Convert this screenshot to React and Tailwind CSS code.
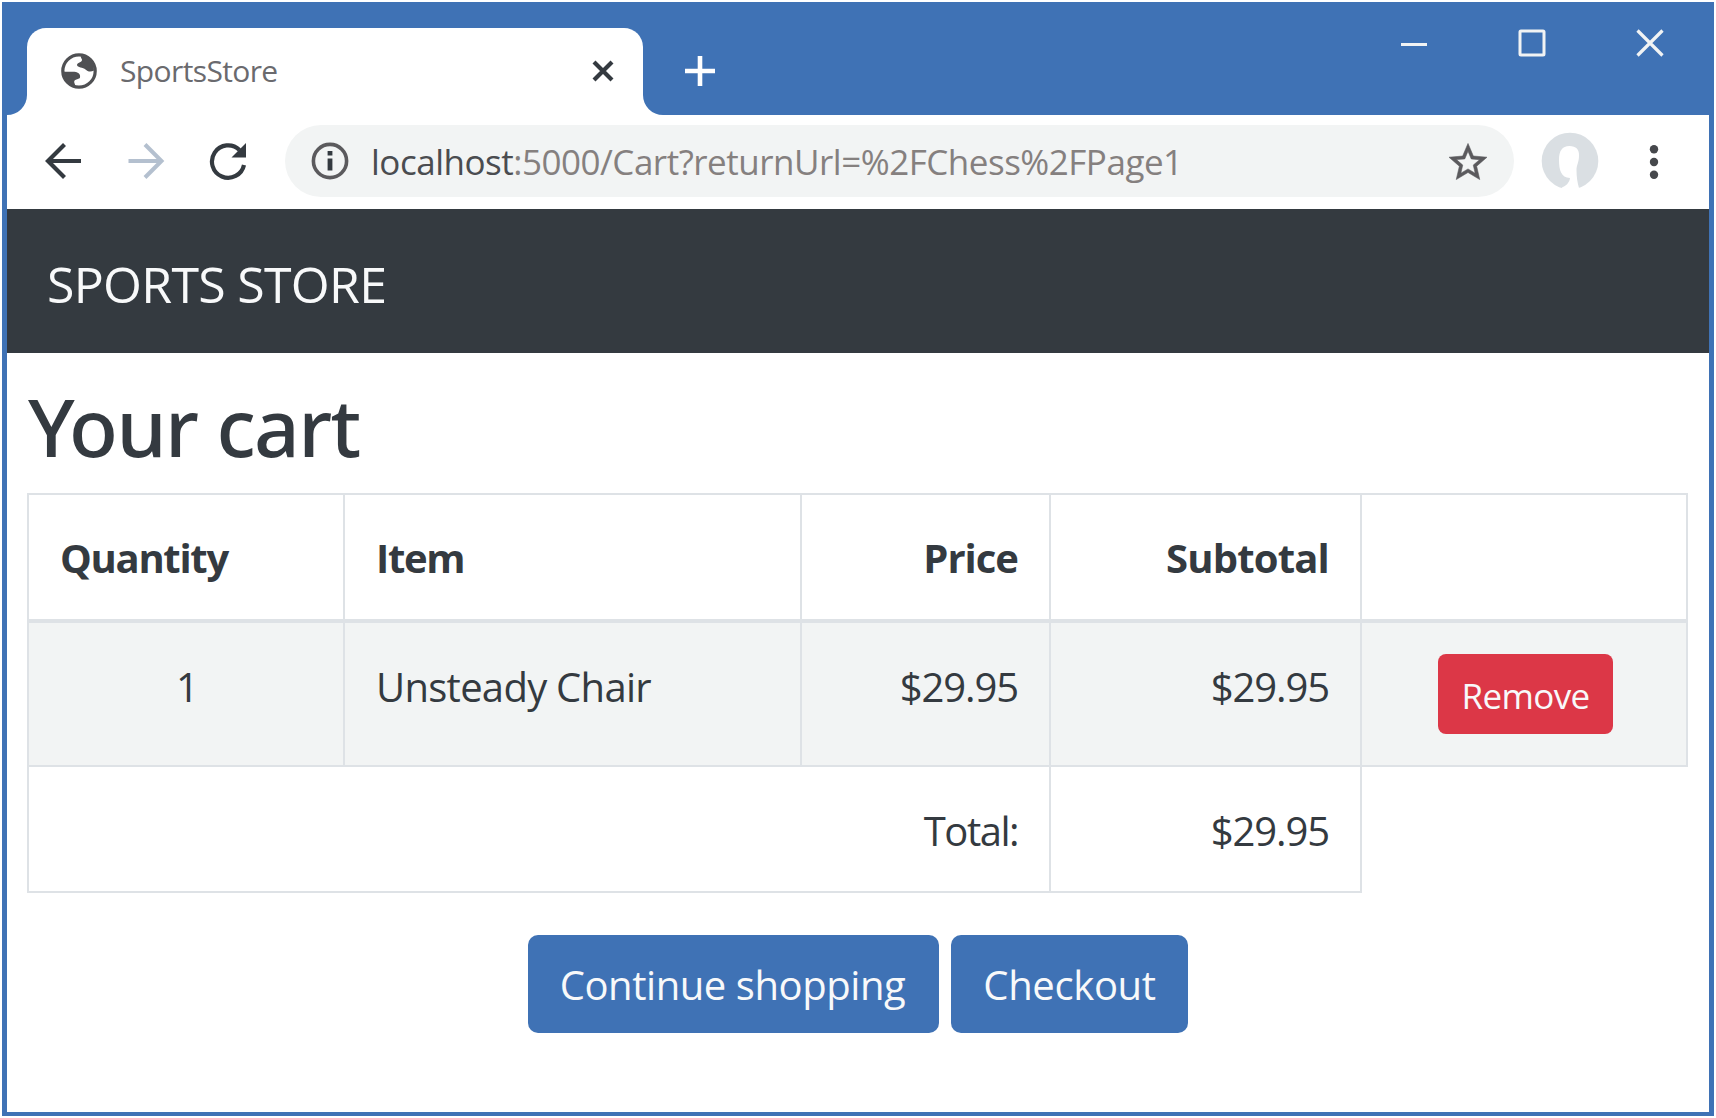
import React from "react";

const INK = "#343a40";

function Globe() {
  return (
    <svg viewBox="0 0 36 36" className="-mt-[2px] h-9 w-9 shrink-0">
      <circle cx="18" cy="18" r="16.2" fill="#fff" stroke="#4f5053" strokeWidth="3.2" />
      <path d="M20 3 C27 3.500 33 9 33 17.500 C29.500 19.500 26.500 18.500 24.500 16.500 C22 14 16.500 15 16 12 C16 9.500 21 9.500 21 7 C21 5 19.500 5.500 20 3 Z" fill="#4f5053" />
      <path d="M3 18.500 C5.500 19.500 11 18 15 19 C18.500 20 19.500 22 19 24.500 C18.500 26.500 13.500 26 13.200 28.500 C13 30.500 14.500 31 14 33 C7 31.500 2.500 26 3 18.500 Z" fill="#4f5053" />
    </svg>
  );
}

function TabStrip() {
  return (
    <div className="flex h-[113px] items-end">
      <svg viewBox="0 0 20 20" className="h-5 w-5 shrink-0">
        <path d="M0 20 A20 20 0 0 0 20 0 V20 Z" fill="#fff" />
      </svg>
      <div className="flex h-[87px] w-[616px] items-center rounded-t-[19px] bg-white pl-[34px] pr-[28px]">
        <Globe />
        <span className="-mt-[2px] ml-[23px] flex-1 whitespace-nowrap text-[30px] leading-[40px] tracking-[-0.62px] text-[#6a6a6e]">SportsStore</span>
        <svg viewBox="0 0 24 24" className="-mt-px h-6 w-6" stroke={INK} strokeWidth="4.2">
          <path d="M3 3 L21 21 M21 3 L3 21" />
        </svg>
      </div>
      <svg viewBox="0 0 20 20" className="h-5 w-5 shrink-0">
        <path d="M20 20 A20 20 0 0 1 0 0 V20 Z" fill="#fff" />
      </svg>
      <svg viewBox="0 0 32 32" className="mb-[28px] ml-[21px] h-8 w-8" stroke="#fff" strokeWidth="4.6">
        <path d="M16 1 V31 M1 16 H31" />
      </svg>
      <div className="ml-auto mr-[44px] flex items-center gap-[88px] self-start pt-[26px]">
        <svg viewBox="0 0 30 30" className="h-[30px] w-[30px]" fill="none" stroke="#f1f3f4" strokeWidth="3">
          <path d="M2 16.500 H28" />
        </svg>
        <svg viewBox="0 0 30 30" className="h-[30px] w-[30px]" fill="none" stroke="#f1f3f4" strokeWidth="3">
          <rect x="3" y="3" width="24" height="24" rx="1" />
        </svg>
        <svg viewBox="0 0 30 30" className="h-[30px] w-[30px]" fill="none" stroke="#f1f3f4" strokeWidth="3.2">
          <path d="M2.500 2.500 L27.500 27.500 M27.500 2.500 L2.500 27.500" />
        </svg>
      </div>
    </div>
  );
}

function Toolbar() {
  return (
    <div className="flex h-[94px] items-center bg-white pb-[2px] pl-[38px]">
      <svg viewBox="0 0 38 38" className="h-[38px] w-[38px]" fill="none" stroke={INK} strokeWidth="4.2">
        <path d="M36 19 H4 M19.500 2.500 L3 19 L19.500 35.500" />
      </svg>
      <svg viewBox="0 0 38 38" className="ml-[44px] h-[38px] w-[38px]" fill="none" stroke="#b4c0cf" strokeWidth="4">
        <path d="M1.500 19 H34 M18 2.500 L34.500 19 L18 35.500" />
      </svg>
      <svg viewBox="0 0 38 38" className="ml-[44px] h-[38px] w-[38px]">
        <path d="M35 23 A16.200 16.200 0 1 1 30.500 8" fill="none" stroke={INK} strokeWidth="4.2" />
        <path d="M37 1 V15.500 H22.500 Z" fill={INK} />
      </svg>
      <div className="ml-[38px] flex h-[72px] w-[1229px] items-center rounded-full bg-[#f2f4f4] pl-[26px] pr-[27px]">
        <svg viewBox="0 0 38 38" className="h-[38px] w-[38px] shrink-0">
          <circle cx="19" cy="19" r="16.600" fill="none" stroke="#5b5a5d" strokeWidth="3.6" />
          <path d="M16.600 9 H21.400 V13.500 H16.600 Z M16.600 16.500 H21.400 V28.500 H16.600 Z" fill={INK} />
        </svg>
        <span className="ml-[22px] mt-[2px] flex-1 whitespace-nowrap text-[35px] leading-[48px] tracking-[-0.49px] text-[#85807f]">
          <span className="text-[#4a4c50]">localhost</span>:5000/Cart?returnUrl=%2FChess%2FPage1
        </span>
        <svg viewBox="0 0 20 19" className="h-[37px] w-[38px]" fill="#5b5a5d" stroke="#5b5a5d" strokeWidth="0.3">
          <path d="M20 7.240l-7.190-.62L10 0 7.190 6.630 0 7.240l5.460 4.730L3.820 19 10 15.270 16.180 19l-1.630-7.030L20 7.240zM10 13.400l-3.760 2.270 1-4.280-3.320-2.880 4.380-.38L10 4.100l1.710 4.040 4.380.38-3.320 2.880 1 4.280L10 13.400z" />
        </svg>
      </div>
      <svg viewBox="0 0 58 58" className="ml-[27px] h-[58px] w-[58px]">
        <circle cx="29" cy="29" r="28.300" fill="#dadfe3" />
        <path d="M28.500 14 C35 14 38.500 17.500 38 24 C38 30 35.500 33 35.500 38 C35.500 45 36.500 51 38 56 L38 58 L20 58 L21 55.500 C25 54 28.500 50.500 29 46 C20 45.500 18 38 18 28 C18 19 21 14 28.500 14 Z" fill="#fff" />
      </svg>
      <svg viewBox="0 0 10 38" className="ml-[50px] mt-[2px] h-[38px] w-[10px]" fill="#46484c">
        <circle cx="5" cy="6.200" r="4.200" />
        <circle cx="5" cy="19" r="4.200" />
        <circle cx="5" cy="31.800" r="4.200" />
      </svg>
    </div>
  );
}

const cell = "border-2 border-[#dee2e6] pl-[31px] pr-[31px]";

function CartTable() {
  return (
    <table className="-ml-px w-[1660px] table-fixed border-collapse text-[40px] leading-[61px] tracking-[-0.72px] text-[#343a40]">
      <colgroup>
        <col className="w-[316px]" />
        <col className="w-[457px]" />
        <col className="w-[249px]" />
        <col className="w-[311px]" />
        <col className="w-[326px]" />
      </colgroup>
      <thead>
        <tr className="h-[127px] font-bold">
          <th className={`${cell} border-b-4 pt-[1px] text-left tracking-[-1.3px]`}>Quantity</th>
          <th className={`${cell} border-b-4 pt-[1px] text-left tracking-[-1.3px]`}>Item</th>
          <th className={`${cell} border-b-4 pt-[1px] text-right tracking-[-1px]`}>Price</th>
          <th className={`${cell} border-b-4 pt-[1px] text-right tracking-[-0.8px]`}>Subtotal</th>
          <th className={`${cell} border-b-4`} />
        </tr>
      </thead>
      <tbody>
        <tr className="h-[145px] bg-[#f2f4f4] align-top">
          <td className={`${cell} pl-[33px] pt-[33px] text-center`}>1</td>
          <td className={`${cell} pt-[33px]`}>Unsteady Chair</td>
          <td className={`${cell} pt-[33px] text-right tracking-[-1.1px]`}>$29.95</td>
          <td className={`${cell} pt-[33px] text-right tracking-[-1.1px]`}>$29.95</td>
          <td className={`${cell} pl-[33px] pt-[31px] text-center`}>
            <button className="mx-auto block h-[80px] w-[175px] rounded-[8px] bg-[#dc3747] pl-[1px] pt-[3px] text-[35px] leading-[77px] tracking-[-0.65px] text-[#f8f9fa]">Remove</button>
          </td>
        </tr>
        <tr className="h-[126px]">
          <td colSpan={3} className={`${cell} pt-[2px] text-right tracking-[-1.5px]`}>Total:</td>
          <td className={`${cell} pt-[2px] text-right tracking-[-1.1px]`}>$29.95</td>
        </tr>
      </tbody>
    </table>
  );
}

export default function App() {
  return (
    <div className="h-[1118px] w-[1716px] overflow-hidden bg-white p-[2px] font-['Open_Sans',sans-serif]">
      <div className="h-[1114px] w-[1712px] border-x-[5px] border-b-[4px] border-[#3f72b5] bg-white">
        <div className="bg-[#3f72b5]">
          <TabStrip />
        </div>
        <Toolbar />
        <header className="flex h-[144px] items-center bg-[#343a40] pl-[40px] text-[50px] leading-[76px] tracking-[-0.7px] text-[#f8f9fa]">
          <span className="mt-[6px]">SPORTS STORE</span>
        </header>
        <main className="px-[21px]">
          <h1 className="h-[140px] pt-[24px] font-['Noto_Sans',sans-serif] text-[80px] font-medium leading-[98px] tracking-[-1.6px] text-[#343a40]">Your cart</h1>
          <CartTable />
          <div className="mt-[42px] flex justify-center gap-[12px] text-[40px] leading-[98px] text-[#f8f9fa]">
            <button className="h-[98px] w-[411px] rounded-[10px] bg-[#3f72b5] pr-[2px] pt-[1px] tracking-[-0.43px]">Continue shopping</button>
            <button className="h-[98px] w-[237px] rounded-[10px] bg-[#3f72b5] pt-[1px] tracking-[-0.35px]">Checkout</button>
          </div>
        </main>
      </div>
    </div>
  );
}
